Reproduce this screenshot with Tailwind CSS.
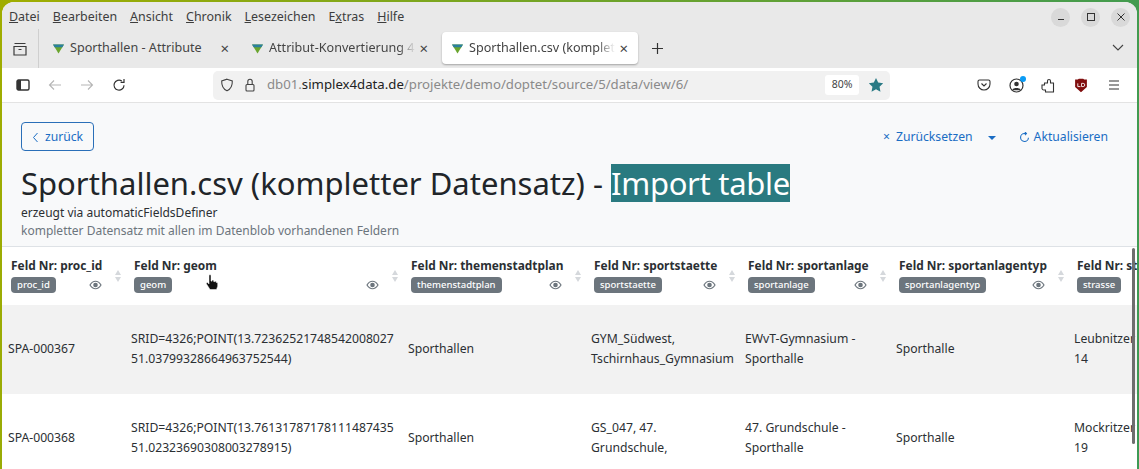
<!DOCTYPE html>
<html lang="de">
<head>
    <meta charset="UTF-8">
    <title>Sporthallen.csv</title>
    <script src="https://cdn.jsdelivr.net/npm/@tailwindcss/browser@4"></script>
</head>
<body class="w-[1139px] h-[469px] overflow-hidden bg-[linear-gradient(100deg,#a0ad00,#3c9a55)] font-['Noto_Sans',sans-serif]">
    <div class="relative ml-[2px] mr-[2px] mt-[2px] h-[467px] flex flex-col overflow-hidden rounded-t-[12px] bg-white">
        <!-- Menu -->
        <div class="h-[30px] shrink-0 bg-[#e9e9e9] flex items-center pl-[7px] pr-[7px] text-[12.450px] text-[#3d3d3d]">
            <div class="flex gap-[13px]">
                <span><u>D</u>atei</span><span><u>B</u>earbeiten</span><span><u>A</u>nsicht</span><span><u>C</u>hronik</span><span><u>L</u>esezeichen</span><span>E<u>x</u>tras</span><span><u>H</u>ilfe</span>
            </div>
            <div class="ml-auto flex gap-[11px]">
                <div class="w-[19px] h-[19px] rounded-full bg-[#d9d9d9] flex items-center justify-center"><svg width="10" height="10" viewBox="0 0 10 10"><path d="M2 7.5h6" stroke="#333" stroke-width="1"/></svg></div>
                <div class="w-[19px] h-[19px] rounded-full bg-[#d9d9d9] flex items-center justify-center"><svg width="10" height="10" viewBox="0 0 10 10"><rect x="1.500" y="1.500" width="7" height="7" fill="none" stroke="#333"/></svg></div>
                <div class="w-[19px] h-[19px] rounded-full bg-[#d9d9d9] flex items-center justify-center"><svg width="10" height="10" viewBox="0 0 10 10"><path d="M1.500 1.500l7 7M8.500 1.500l-7 7" stroke="#333"/></svg></div>
            </div>
        </div>
        <!-- Tabs -->
        <div class="h-[36px] shrink-0 bg-[#e9e9e9] flex items-start text-[12.600px] text-[#444]">
            <div class="w-[37px] h-[39px] -mt-[3px] flex items-center justify-center border-r border-[#cfcfcf]">
                <svg width="16" height="16" viewBox="0 0 16 16" fill="none" stroke="#3a3a3a" stroke-width="1.2"><path d="M2.500 2.500h11M2 5.500h12v8.500H2zM6.500 8.500h3"/></svg>
            </div>
            <div class="w-[210px] h-[32px] flex items-center pl-[14px] pr-[20px]">
                <svg width="11" height="11" viewBox="0 0 12 12" class="mr-[6px] shrink-0"><path d="M0 1.500h12L6 11.500z" fill="#6aa52e"/><path d="M0 1.500h12l-1.800 3H1.800z" fill="#2a7f9f"/></svg>
                <span class="whitespace-nowrap">Sporthallen - Attribute</span>
                <span class="ml-auto text-[15px] leading-none text-[#444]">×</span>
            </div>
            <div class="w-[193px] h-[32px] flex items-center pl-[3px] pr-[14px]">
                <svg width="11" height="11" viewBox="0 0 12 12" class="mr-[6px] shrink-0"><path d="M0 1.500h12L6 11.500z" fill="#6aa52e"/><path d="M0 1.500h12l-1.800 3H1.800z" fill="#2a7f9f"/></svg>
                <span class="whitespace-nowrap overflow-hidden w-[147px] [mask-image:linear-gradient(to_right,black_88%,transparent)]">Attribut-Konvertierung 4</span>
                <span class="ml-auto text-[15px] leading-none text-[#444]">×</span>
            </div>
            <div class="w-[196px] h-[32px] bg-white rounded-[4px] shadow-[0_1px_2px_rgba(0,0,0,0.3)] flex items-center pl-[10px] pr-[10px]">
                <svg width="11" height="11" viewBox="0 0 12 12" class="mr-[6px] shrink-0"><path d="M0 1.500h12L6 11.500z" fill="#6aa52e"/><path d="M0 1.500h12l-1.800 3H1.800z" fill="#2a7f9f"/></svg>
                <span class="whitespace-nowrap overflow-hidden w-[146px] [mask-image:linear-gradient(to_right,black_88%,transparent)]">Sporthallen.csv (kompletter</span>
                <span class="ml-auto text-[15px] leading-none text-[#444]">×</span>
            </div>
            <div class="ml-[11px] w-[16px] h-[32px] flex items-center justify-center">
                <svg width="13" height="13" viewBox="0 0 13 13"><path d="M6.500 1v11M1 6.500h11" stroke="#333" stroke-width="1.2"/></svg>
            </div>
            <div class="ml-auto mr-[13px] h-[32px] flex items-center">
                <svg width="12" height="8" viewBox="0 0 12 8" fill="none"><path d="M1 1l5 5 5-5" stroke="#444" stroke-width="1.1"/></svg>
            </div>
        </div>
        <!-- Nav bar -->
        <div class="h-[35px] shrink-0 bg-white border-b border-[#e3e3e3] flex items-center text-[#3a3a3a]">
            <div class="w-[211px] flex items-center pl-[14px] gap-[18px]">
                <svg width="14" height="12" viewBox="0 0 14 12" fill="none"><rect x="1" y="1" width="12" height="10" rx="1.500" stroke="#333" stroke-width="1.4"/><rect x="1" y="1" width="4" height="10" fill="#333"/></svg>
                <svg width="14" height="12" viewBox="0 0 14 12" fill="none" stroke="#b5b5b5" stroke-width="1.1"><path d="M13 6H1.500M6 1.500L1.500 6 6 10.500"/></svg>
                <svg width="14" height="12" viewBox="0 0 14 12" fill="none" stroke="#b5b5b5" stroke-width="1.1"><path d="M1 6h11.500M8 1.500L12.500 6 8 10.500"/></svg>
                <svg width="14" height="14" viewBox="0 0 14 14" fill="none" stroke="#333" stroke-width="1.2"><path d="M12 7.200A5 5 0 1 1 9.800 3M12 1v3.400H8.600"/></svg>
            </div>
            <div class="w-[677px] h-[29px] rounded-[5px] bg-[#f1f1f1] flex items-center pl-[7px] pr-[6px] text-[13.200px]">
                <svg width="14" height="14" viewBox="0 0 14 14" fill="none" stroke="#444" stroke-width="1.1" class="mr-[10px]"><path d="M7 1.200L12.300 3c.2 4.500-1.400 8-5.300 9.800C3.100 11 1.500 7.500 1.700 3z"/></svg>
                <svg width="12" height="14" viewBox="0 0 12 14" fill="none" stroke="#444" stroke-width="1.1" class="mr-[11px]"><rect x="2" y="6.500" width="8" height="6.500" rx="1"/><path d="M3.800 6.500V3.500a2.200 2.200 0 0 1 4.400 0v3"/></svg>
                <span class="whitespace-nowrap text-[#8a8a8a]">db01.<span class="text-[#222]">simplex4data.de</span>/projekte/demo/doptet/source/5/data/view/6/</span>
                <span class="ml-auto bg-white rounded-[3px] h-[20px] w-[34px] flex items-center justify-center text-[10.500px] text-[#444]">80%</span>
                <svg width="16" height="16" viewBox="0 0 24 24" class="ml-[9px]"><path d="M12 1.500l3.300 6.900 7.500 1-5.500 5.200 1.400 7.500-6.700-3.600-6.700 3.600 1.400-7.500L1.200 9.400l7.500-1z" fill="#2a7a85"/></svg>
            </div>
            <div class="ml-auto flex items-center gap-[17.500px] pr-[16px]">
                <svg width="14" height="14" viewBox="0 0 14 14" fill="none" stroke="#333" stroke-width="1.1"><path d="M2.500 2h9A1.500 1.500 0 0 1 13 3.500V6a6 6 0 0 1-12 0V3.500A1.500 1.500 0 0 1 2.500 2zM4.500 5.500L7 8l2.500-2.500"/></svg>
                <div class="relative w-[15px] h-[15px]">
                    <svg width="15" height="15" viewBox="0 0 15 15"><circle cx="7.500" cy="7.500" r="6.500" fill="none" stroke="#333" stroke-width="1.200"/><circle cx="7.500" cy="6" r="2.300" fill="#333"/><path d="M3.500 11.500c1-2 7-2 8 0v.8h-8z" fill="#333"/></svg>
                    <div class="absolute -top-[2px] -right-[2px] w-[6px] h-[6px] rounded-full bg-[#0a9bf5]"></div>
                </div>
                <svg width="14" height="15" viewBox="0 0 14 15" fill="none" stroke="#333" stroke-width="1.100"><path d="M1 7h2.500V5h3V3a1.500 1.500 0 0 1 3 0v2h3v9H4.500v-2H3a2 2 0 0 1-2-2.500z"/></svg>
                <svg width="14" height="15" viewBox="0 0 13 14" class="ml-[1px]"><path d="M1 1.500h2.500l1-.8h4l1 .8H12v7L6.500 13.300 1 8.500z" fill="#800e0e"/><path d="M3.500 5v3h2.500M7 8V5h1.500a1.500 1.500 0 0 1 0 3z" stroke="#fff" stroke-width=".8" fill="none"/></svg>
                <svg width="14" height="12" viewBox="0 0 14 12" stroke="#333" stroke-width="1.100" class="ml-[2px]"><path d="M2 2h10M2 6h10M2 10h10"/></svg>
            </div>
        </div>
        <!-- Page header -->
        <div class="h-[144px] shrink-0 bg-[#f8f9fa] border-b border-[#dee2e6] px-[19px] pt-[19px]">
            <div class="flex items-start justify-between">
                <button class="w-[73px] h-[29px] pt-[1px] rounded-[4px] border border-[#2a6fb8] text-[#1a6dc4] text-[12.200px] flex items-center justify-center gap-[6px]">
                    <svg width="7" height="11" viewBox="0 0 7 11" fill="none"><path d="M5.500 1L1.500 5.500l4 4.500" stroke="#1a6dc4" stroke-width="1"/></svg>zurück
                </button>
                <div class="flex items-center h-[29px] pt-[2px] text-[12.200px] text-[#1a6dc4] pr-[10px]">
                    <span class="mr-[6px]">×</span><span>Zurücksetzen</span>
                    <span class="ml-[15px] w-0 h-0 border-x-[4px] border-x-transparent border-t-[4px] border-t-[#1a6dc4]"></span>
                    <svg width="11" height="11" viewBox="0 0 14 14" fill="none" stroke="#1a6dc4" stroke-width="1.400" class="ml-[23px] mr-[4px]"><path d="M12 7.200A5 5 0 1 1 7 2h2M7.500 0l2 2-2 2"/></svg>
                    <span>Aktualisieren</span>
                </div>
            </div>
            <h1 class="mt-[13px] text-[31px] leading-[38px] text-[#212529] whitespace-nowrap">Sporthallen.csv (kompletter Datensatz) - <span class="inline-block h-[38px] tracking-[-0.3px] bg-[#2a7a80] text-white">Import table</span></h1>
            <p class="mt-[2px] text-[12px] leading-[18px] text-[#2b2f33]">erzeugt via automaticFieldsDefiner</p>
            <p class="text-[12px] leading-[18px] text-[#6c757d]">kompletter Datensatz mit allen im Datenblob vorhandenen Feldern</p>
        </div>
        <!-- Table -->
        <div class="relative flex-1 overflow-hidden bg-white">
            <table class="table-fixed w-[1170px] border-collapse text-[12.200px] leading-[19.500px] text-[#2b2f33]">
                <colgroup>
                    <col class="w-[121px]"><col class="w-[277px]"><col class="w-[183px]"><col class="w-[154px]"><col class="w-[151px]"><col class="w-[178px]"><col>
                </colgroup>
                <thead>
                    <tr class="h-[58px] text-[11.900px]">
                        <th class="relative pl-[9px] pr-[21px] text-left align-top pt-[9px] font-bold">
                            <div class="whitespace-nowrap">Feld Nr: proc_id</div>
                            <div class="mt-[1px] flex items-center justify-between"><span class="bg-[#6c757d] text-white rounded-[4px] px-[6px] h-[16px] flex items-center text-[9.500px] font-medium">proc_id</span><svg width="13" height="10" viewBox="0 0 13 10" fill="none" stroke="#6c757d" stroke-width="1.200"><path d="M1 5c3-5 8-5 11 0-3 5-8 5-11 0z"/><circle cx="6.500" cy="5" r="1.700" fill="#6c757d"/></svg></div>
                            <svg width="6" height="12" viewBox="0 0 6 12" fill="#d5d8dc" class="absolute right-[2px] top-[23px]"><path d="M3 0l3 5H0zM3 12l3-5H0z"/></svg>
                        </th>
                        <th class="relative pl-[11px] pr-[21px] text-left align-top pt-[9px] font-bold">
                            <div class="whitespace-nowrap">Feld Nr: geom</div>
                            <div class="mt-[1px] flex items-center justify-between"><span class="bg-[#6c757d] text-white rounded-[4px] px-[6px] h-[16px] flex items-center text-[9.500px] font-medium">geom</span><svg width="13" height="10" viewBox="0 0 13 10" fill="none" stroke="#6c757d" stroke-width="1.200"><path d="M1 5c3-5 8-5 11 0-3 5-8 5-11 0z"/><circle cx="6.500" cy="5" r="1.700" fill="#6c757d"/></svg></div>
                            <svg width="6" height="12" viewBox="0 0 6 12" fill="#d5d8dc" class="absolute right-[2px] top-[23px]"><path d="M3 0l3 5H0zM3 12l3-5H0z"/></svg>
                        </th>
                        <th class="relative pl-[11px] pr-[21px] text-left align-top pt-[9px] font-bold">
                            <div class="whitespace-nowrap">Feld Nr: themenstadtplan</div>
                            <div class="mt-[1px] flex items-center justify-between"><span class="bg-[#6c757d] text-white rounded-[4px] px-[6px] h-[16px] flex items-center text-[9.500px] font-medium">themenstadtplan</span><svg width="13" height="10" viewBox="0 0 13 10" fill="none" stroke="#6c757d" stroke-width="1.200"><path d="M1 5c3-5 8-5 11 0-3 5-8 5-11 0z"/><circle cx="6.500" cy="5" r="1.700" fill="#6c757d"/></svg></div>
                            <svg width="6" height="12" viewBox="0 0 6 12" fill="#d5d8dc" class="absolute right-[2px] top-[23px]"><path d="M3 0l3 5H0zM3 12l3-5H0z"/></svg>
                        </th>
                        <th class="relative pl-[11px] pr-[21px] text-left align-top pt-[9px] font-bold">
                            <div class="whitespace-nowrap">Feld Nr: sportstaette</div>
                            <div class="mt-[1px] flex items-center justify-between"><span class="bg-[#6c757d] text-white rounded-[4px] px-[6px] h-[16px] flex items-center text-[9.500px] font-medium">sportstaette</span><svg width="13" height="10" viewBox="0 0 13 10" fill="none" stroke="#6c757d" stroke-width="1.200"><path d="M1 5c3-5 8-5 11 0-3 5-8 5-11 0z"/><circle cx="6.500" cy="5" r="1.700" fill="#6c757d"/></svg></div>
                            <svg width="6" height="12" viewBox="0 0 6 12" fill="#d5d8dc" class="absolute right-[2px] top-[23px]"><path d="M3 0l3 5H0zM3 12l3-5H0z"/></svg>
                        </th>
                        <th class="relative pl-[11px] pr-[21px] text-left align-top pt-[9px] font-bold">
                            <div class="whitespace-nowrap">Feld Nr: sportanlage</div>
                            <div class="mt-[1px] flex items-center justify-between"><span class="bg-[#6c757d] text-white rounded-[4px] px-[6px] h-[16px] flex items-center text-[9.500px] font-medium">sportanlage</span><svg width="13" height="10" viewBox="0 0 13 10" fill="none" stroke="#6c757d" stroke-width="1.200"><path d="M1 5c3-5 8-5 11 0-3 5-8 5-11 0z"/><circle cx="6.500" cy="5" r="1.700" fill="#6c757d"/></svg></div>
                            <svg width="6" height="12" viewBox="0 0 6 12" fill="#d5d8dc" class="absolute right-[2px] top-[23px]"><path d="M3 0l3 5H0zM3 12l3-5H0z"/></svg>
                        </th>
                        <th class="relative pl-[11px] pr-[21px] text-left align-top pt-[9px] font-bold">
                            <div class="whitespace-nowrap">Feld Nr: sportanlagentyp</div>
                            <div class="mt-[1px] flex items-center justify-between"><span class="bg-[#6c757d] text-white rounded-[4px] px-[6px] h-[16px] flex items-center text-[9.500px] font-medium">sportanlagentyp</span><svg width="13" height="10" viewBox="0 0 13 10" fill="none" stroke="#6c757d" stroke-width="1.200"><path d="M1 5c3-5 8-5 11 0-3 5-8 5-11 0z"/><circle cx="6.500" cy="5" r="1.700" fill="#6c757d"/></svg></div>
                            <svg width="6" height="12" viewBox="0 0 6 12" fill="#d5d8dc" class="absolute right-[2px] top-[23px]"><path d="M3 0l3 5H0zM3 12l3-5H0z"/></svg>
                        </th>
                        <th class="pl-[11px] text-left align-top pt-[9px] font-bold">
                            <div class="whitespace-nowrap">Feld Nr: strasse</div>
                            <div class="mt-[1px] flex items-center"><span class="bg-[#6c757d] text-white rounded-[4px] px-[6px] h-[16px] flex items-center text-[9.500px] font-medium">strasse</span></div>
                        </th>
                    </tr>
                </thead>
                <tbody>
                    <tr class="h-[89px] bg-[#f2f2f2]">
                        <td class="px-[6px] pb-[2px] align-middle">SPA-000367</td>
                        <td class="px-[8px] pb-[2px] align-middle">SRID=4326;POINT(13.72362521748542008027 51.03799328664963752544)</td>
                        <td class="px-[8px] pb-[2px] align-middle">Sporthallen</td>
                        <td class="px-[8px] pb-[2px] align-middle">GYM_Südwest, Tschirnhaus_Gymnasium</td>
                        <td class="px-[8px] pb-[2px] align-middle">EWvT-Gymnasium - Sporthalle</td>
                        <td class="px-[8px] pb-[2px] align-middle">Sporthalle</td>
                        <td class="px-[8px] pb-[2px] align-middle">Leubnitzer Str. 14</td>
                    </tr>
                    <tr class="h-[89px]">
                        <td class="px-[6px] pb-[2px] align-middle">SPA-000368</td>
                        <td class="px-[8px] pb-[2px] align-middle">SRID=4326;POINT(13.76131787178111487435 51.02323690308003278915)</td>
                        <td class="px-[8px] pb-[2px] align-middle">Sporthallen</td>
                        <td class="px-[8px] pb-[2px] align-middle">GS_047, 47. Grundschule,</td>
                        <td class="px-[8px] pb-[2px] align-middle">47. Grundschule - Sporthalle</td>
                        <td class="px-[8px] pb-[2px] align-middle">Sporthalle</td>
                        <td class="px-[8px] pb-[2px] align-middle">Mockritzer Str. 19</td>
                    </tr>
                </tbody>
            </table>
            <div class="absolute right-[2px] top-[1px] w-[3px] h-[196px] rounded-full bg-[#6e6e6e]"></div>
        </div>
        <!-- Mouse pointer -->
        <svg width="14" height="17" viewBox="0 0 14 17" class="absolute left-[203px] top-[272px]"><path d="M4 1.500c0-1 2-1 2 0V7l1 .2V6.500c0-.8 1.600-.8 1.700 0v1l1 .2c0-.7 1.500-.7 1.600 0v1c.4-.5 1.400-.3 1.400.5v3l-1.200 3.300H5L1.500 10c-.6-1 .6-2 1.400-1.300L4 10z" fill="#111" stroke="#fff" stroke-width=".5"/></svg>
    </div>
</body>
</html>
